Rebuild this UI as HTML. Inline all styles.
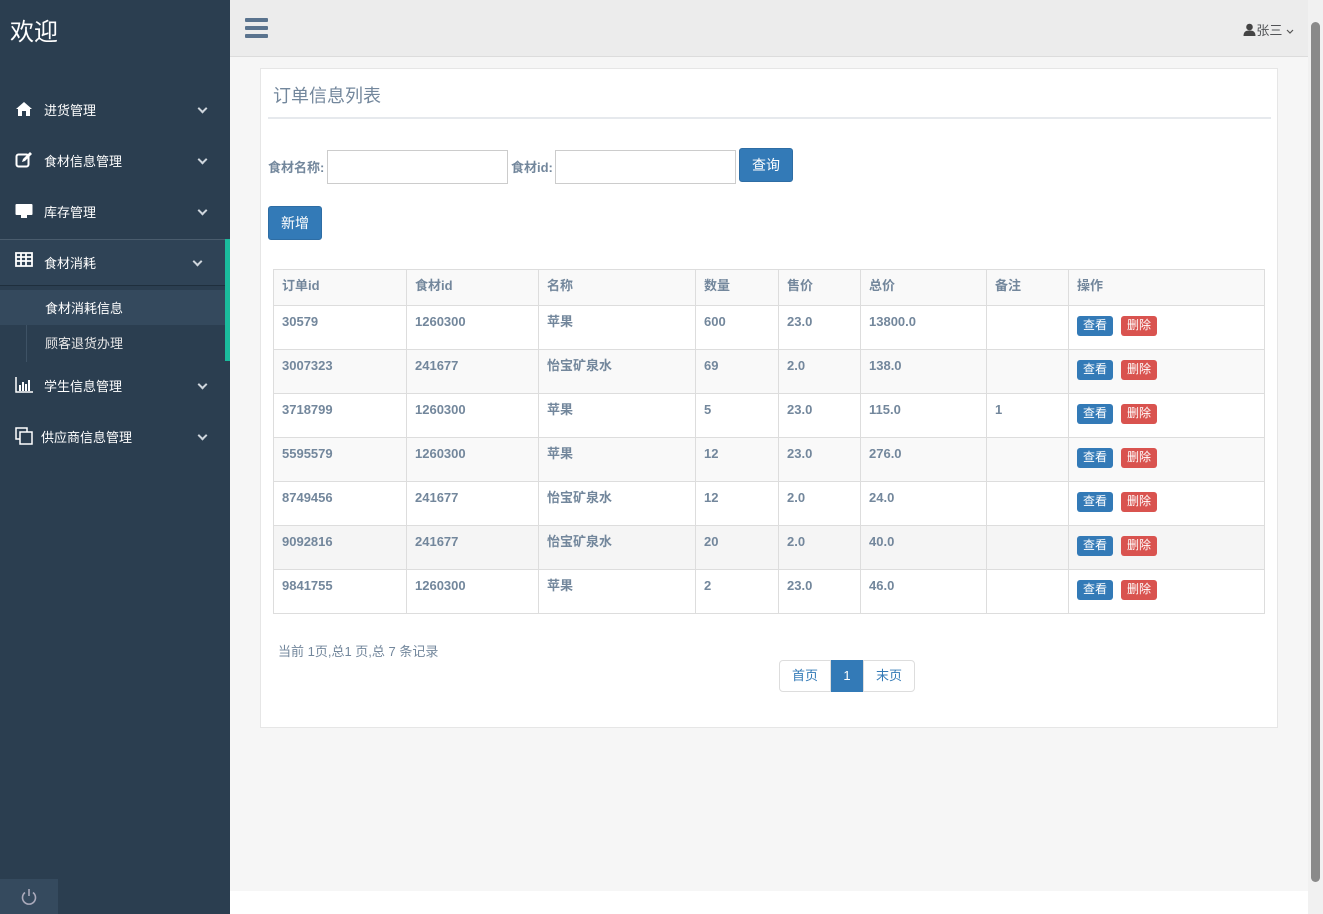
<!DOCTYPE html>
<html><head><meta charset="utf-8"><style>
*{margin:0;padding:0;box-sizing:border-box}
body{width:1323px;height:914px;overflow:hidden;font-family:"Liberation Sans","Noto Sans CJK SC",sans-serif;background:#f6f6f6;position:relative;font-size:13px;color:#333}
.side{position:absolute;left:0;top:0;width:230px;height:914px;background:#2b3e50;color:#fff}
.logo{position:absolute;left:10px;top:12px;font-size:24px;color:#fff}
.mi{position:absolute;left:0;width:225px;height:44px;font-size:13px;color:#fff}
.mi .ic{position:absolute;left:15px;top:13px;width:18px;height:18px}
.mi .t{position:absolute;left:44px;top:13px}
.mi .ch{position:absolute;right:19px;top:18px;width:7px;height:7px;border-right:2px solid #cfd6dd;border-bottom:2px solid #cfd6dd;transform:rotate(45deg)}
.sub{position:absolute;left:0;width:225px;height:35px;font-size:13px;color:#fff}
.sub span{position:absolute;left:45px;top:8px}
.hdr{position:absolute;left:230px;top:0;width:1078px;height:57px;background:#ececec;border-bottom:1px solid #dcdcdc}
.sb{position:absolute;left:1308px;top:0;width:15px;height:914px;background:#f1f1f1}
.foot{position:absolute;left:230px;top:891px;width:1078px;height:23px;background:#fff}
.panel{position:absolute;left:260px;top:68px;width:1018px;height:660px;background:#fff;border:1px solid #e6e6e6}
.btn{position:absolute;background:#337ab7;border:1px solid #2e6da4;color:#fff;border-radius:3px;font-size:14px;text-align:center}
.inp{position:absolute;height:34px;border:1px solid #ccc;background:#fff}
.lbl{position:absolute;font-weight:bold;color:#73879c;font-size:13px}
table{position:absolute;left:273px;top:269px;border-collapse:collapse;width:992px;table-layout:fixed}
td,th{border:1px solid #ddd;text-align:left;vertical-align:top;padding:7px 8px 0;line-height:18px;font-weight:bold;color:#73879c;font-size:13px;height:44px}
th{height:36px;background:#f9f9f9}
td *{vertical-align:top}
tr.s td{background:#f9f9f9}
tr.h td{background:#f5f5f5}
.b{display:inline-block;font-size:12px;line-height:15px;color:#fff;padding:2px 6px 3px;border-radius:3px;font-weight:normal;margin-right:8px;margin-top:3px}
.bb{background:#337ab7}.br{background:#d9534f}
</style></head><body>
<div class="side">
<div class="logo">欢迎</div>
<div class="mi" style="top:87px"><svg class="ic" viewBox="0 0 18 18"><path d="M9 2L1 9h2v7h4v-5h4v5h4V9h2z" fill="#fff"/></svg><span class="t">进货管理</span><i class="ch"></i></div>
<div class="mi" style="top:138px"><svg class="ic" viewBox="0 0 18 18"><rect x="1.5" y="3.5" width="12" height="12" rx="2" fill="none" stroke="#fff" stroke-width="2"/><path d="M7 11l1-3 7-7 2 2-7 7z" fill="#fff"/></svg><span class="t">食材信息管理</span><i class="ch"></i></div>
<div class="mi" style="top:189px"><svg class="ic" viewBox="0 0 18 18"><rect x="0.5" y="2" width="17" height="11" rx="1" fill="#fff"/><rect x="6" y="13" width="6" height="3" fill="#fff"/></svg><span class="t">库存管理</span><i class="ch"></i></div>
<div style="position:absolute;left:0;top:239px;width:225px;height:47px;background:#2f4356;border-top:1px solid #4a5c6d;border-bottom:1px solid #1f2f3d"></div>
<div class="mi" style="top:240px"><svg class="ic" viewBox="0 0 18 18" style="top:11px"><path d="M1 2h16v13H1z M1 6h16 M1 10h16 M6 2v13 M11 2v13" fill="none" stroke="#fff" stroke-width="1.8"/></svg><span class="t">食材消耗</span><i class="ch" style="right:24px"></i></div>
<div style="position:absolute;left:225px;top:239px;width:5px;height:122px;background:#1abb9c"></div>
<div style="position:absolute;left:26px;top:290px;width:1px;height:72px;background:#3e5265"></div>
<div class="sub" style="top:290px;background:#34495d"><span>食材消耗信息</span></div>
<div class="sub" style="top:325px;color:#e7e7e7"><span>顾客退货办理</span></div>
<div class="mi" style="top:363px"><svg class="ic" viewBox="0 0 18 18"><path d="M1 1v15h17" fill="none" stroke="#fff" stroke-width="1.5"/><rect x="4" y="9" width="2" height="6" fill="#fff"/><rect x="7" y="6" width="2" height="9" fill="#fff"/><rect x="10" y="8" width="2" height="7" fill="#fff"/><rect x="13" y="4" width="2" height="11" fill="#fff"/></svg><span class="t">学生信息管理</span><i class="ch"></i></div>
<div class="mi" style="top:414px"><svg class="ic" viewBox="0 0 18 18"><rect x="1" y="1" width="11" height="11" fill="none" stroke="#fff" stroke-width="1.5"/><rect x="5" y="5" width="12" height="12" fill="#2b3e50" stroke="#fff" stroke-width="1.5"/></svg><span class="t" style="left:41px">供应商信息管理</span><i class="ch"></i></div>
<div style="position:absolute;left:0;top:879px;width:58px;height:35px;background:#354a5e"><svg style="position:absolute;left:20px;top:9px" width="18" height="18" viewBox="0 0 18 18"><path d="M5 4.5A6.5 6.5 0 1 0 13 4.5" fill="none" stroke="#aab" stroke-width="1.6"/><path d="M9 1v7" stroke="#aab" stroke-width="1.6"/></svg></div>
</div>
<div class="hdr">
<div style="position:absolute;left:15px;top:18px;width:23px;height:4px;background:#5a738e;box-shadow:0 8px 0 #5a738e,0 16px 0 #5a738e;border-radius:1px"></div>
<div style="position:absolute;right:14px;top:20px;font-size:13px;color:#515356"><svg width="13" height="13" viewBox="0 0 12 13" style="vertical-align:-1px"><circle cx="6" cy="4" r="3.3" fill="#444"/><path d="M0 13c0-4 2-5.5 6-5.5s6 1.5 6 5.5z" fill="#444"/></svg>张三 <svg width="8" height="6" viewBox="0 0 8 6"><path d="M1 1l3 3 3-3" fill="none" stroke="#555" stroke-width="1.2"/></svg></div>
</div>
<div class="sb"><div style="position:absolute;left:3px;top:22px;width:9px;height:860px;background:#8a8a8a;border-radius:5px"></div></div>
<div class="foot"></div>
<div class="panel">
<div style="position:absolute;left:12px;top:13px;font-size:18px;color:#73879c">订单信息列表</div>
<div style="position:absolute;left:7px;top:48px;width:1003px;height:2px;background:#e6e9ed"></div>
</div>
<div class="lbl" style="left:268px;top:157px">食材名称:</div>
<div class="inp" style="left:327px;top:150px;width:181px"></div>
<div class="lbl" style="left:511px;top:157px">食材id:</div>
<div class="inp" style="left:555px;top:150px;width:181px"></div>
<div class="btn" style="left:739px;top:148px;width:54px;height:34px;line-height:32px">查询</div>
<div class="btn" style="left:268px;top:206px;width:54px;height:34px;line-height:32px">新增</div>
<table>
<tr><th style="width:133px">订单id</th><th style="width:132px">食材id</th><th style="width:157px">名称</th><th style="width:83px">数量</th><th style="width:82px">售价</th><th style="width:126px">总价</th><th style="width:82px">备注</th><th>操作</th></tr>
<tr><td>30579</td><td>1260300</td><td>苹果</td><td>600</td><td>23.0</td><td>13800.0</td><td></td><td><span class="b bb">查看</span><span class="b br">删除</span></td></tr>
<tr class="s"><td>3007323</td><td>241677</td><td>怡宝矿泉水</td><td>69</td><td>2.0</td><td>138.0</td><td></td><td><span class="b bb">查看</span><span class="b br">删除</span></td></tr>
<tr><td>3718799</td><td>1260300</td><td>苹果</td><td>5</td><td>23.0</td><td>115.0</td><td>1</td><td><span class="b bb">查看</span><span class="b br">删除</span></td></tr>
<tr class="s"><td>5595579</td><td>1260300</td><td>苹果</td><td>12</td><td>23.0</td><td>276.0</td><td></td><td><span class="b bb">查看</span><span class="b br">删除</span></td></tr>
<tr><td>8749456</td><td>241677</td><td>怡宝矿泉水</td><td>12</td><td>2.0</td><td>24.0</td><td></td><td><span class="b bb">查看</span><span class="b br">删除</span></td></tr>
<tr class="h"><td>9092816</td><td>241677</td><td>怡宝矿泉水</td><td>20</td><td>2.0</td><td>40.0</td><td></td><td><span class="b bb">查看</span><span class="b br">删除</span></td></tr>
<tr><td>9841755</td><td>1260300</td><td>苹果</td><td>2</td><td>23.0</td><td>46.0</td><td></td><td><span class="b bb">查看</span><span class="b br">删除</span></td></tr>
</table>
<div style="position:absolute;left:278px;top:641px;font-size:13px;color:#73879c">当前 1页,总1 页,总 7 条记录</div>
<div style="position:absolute;left:779px;top:660px;height:32px;display:flex;font-size:13px">
<div style="width:52px;border:1px solid #ddd;border-radius:4px 0 0 4px;text-align:center;line-height:30px;color:#337ab7;background:#fff">首页</div>
<div style="width:32px;background:#337ab7;color:#fff;text-align:center;line-height:32px">1</div>
<div style="width:52px;border:1px solid #ddd;border-radius:0 4px 4px 0;text-align:center;line-height:30px;color:#337ab7;background:#fff">末页</div>
</div>
</body></html>
